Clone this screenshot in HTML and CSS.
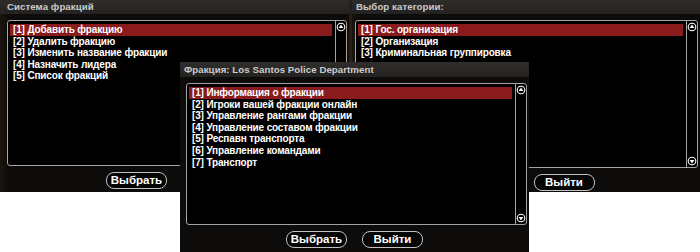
FILE: index.html
```html
<!DOCTYPE html>
<html lang="ru">
<head>
<meta charset="utf-8">
<title>Фракции</title>
<link rel="stylesheet" href="styles.css">
</head>
<body>
<div class="scene">
  <div class="desk"></div>

  <section class="dlg dlg-sys">
    <div class="title">Система фракций</div>
    <div class="body">
      <div class="listbox">
        <ul class="items">
          <li class="sel">[1] Добавить фракцию</li>
          <li>[2] Удалить фракцию</li>
          <li>[3] Изменить название фракции</li>
          <li>[4] Назначить лидера</li>
          <li>[5] Список фракций</li>
        </ul>
        <div class="scroll">
          <svg class="arr" width="10" height="10" viewBox="0 0 10 10"><circle cx="5" cy="5" r="3.8" fill="none" stroke="#fff" stroke-width="1.1"/><path d="M2.6 6 L5 2.6 L7.4 6 Z" fill="#fff"/></svg>
          <svg class="arr" width="10" height="10" viewBox="0 0 10 10"><circle cx="5" cy="5" r="3.8" fill="none" stroke="#fff" stroke-width="1.1"/><path d="M2.6 4 L5 7.4 L7.4 4 Z" fill="#fff"/></svg>
        </div>
      </div>
    </div>
    <div class="footer">
      <span class="btn">Выбрать</span>
      <span class="btn">Выйти</span>
    </div>
  </section>

  <section class="dlg dlg-cat">
    <div class="title">Выбор категории:</div>
    <div class="body">
      <div class="listbox">
        <ul class="items">
          <li class="sel">[1] Гос. организация</li>
          <li>[2] Организация</li>
          <li>[3] Криминальная группировка</li>
        </ul>
        <div class="scroll">
          <svg class="arr" width="10" height="10" viewBox="0 0 10 10"><circle cx="5" cy="5" r="3.8" fill="none" stroke="#fff" stroke-width="1.1"/><path d="M2.6 6 L5 2.6 L7.4 6 Z" fill="#fff"/></svg>
          <svg class="arr" width="10" height="10" viewBox="0 0 10 10"><circle cx="5" cy="5" r="3.8" fill="none" stroke="#fff" stroke-width="1.1"/><path d="M2.6 4 L5 7.4 L7.4 4 Z" fill="#fff"/></svg>
        </div>
      </div>
    </div>
    <div class="footer">
      <span class="btn">Выбрать</span>
      <span class="btn">Выйти</span>
    </div>
  </section>

  <section class="dlg dlg-fac">
    <div class="title">Фракция: Los Santos Police Department</div>
    <div class="body">
      <div class="listbox">
        <ul class="items">
          <li class="sel">[1] Информация о фракции</li>
          <li>[2] Игроки вашей фракции онлайн</li>
          <li>[3] Управление рангами фракции</li>
          <li>[4] Управление составом фракции</li>
          <li>[5] Респавн транспорта</li>
          <li>[6] Управление командами</li>
          <li>[7] Транспорт</li>
        </ul>
        <div class="scroll">
          <svg class="arr" width="10" height="10" viewBox="0 0 10 10"><circle cx="5" cy="5" r="3.8" fill="none" stroke="#fff" stroke-width="1.1"/><path d="M2.6 6 L5 2.6 L7.4 6 Z" fill="#fff"/></svg>
          <svg class="arr" width="10" height="10" viewBox="0 0 10 10"><circle cx="5" cy="5" r="3.8" fill="none" stroke="#fff" stroke-width="1.1"/><path d="M2.6 4 L5 7.4 L7.4 4 Z" fill="#fff"/></svg>
        </div>
      </div>
    </div>
    <div class="footer">
      <span class="btn">Выбрать</span>
      <span class="btn">Выйти</span>
    </div>
  </section>
</div>
</body>
</html>
```

FILE: styles.css
```css
* { box-sizing: border-box; }

html, body {
  margin: 0;
  padding: 0;
  background: #ffffff;
}

.scene {
  position: relative;
  width: 700px;
  height: 252px;
  overflow: hidden;
  background: #ffffff;
  font-family: "Liberation Sans", Arial, sans-serif;
}

.desk {
  position: absolute;
  left: 0;
  top: 0;
  width: 700px;
  height: 192px;
  background: linear-gradient(90deg, #3e2b1c 0%, #2a1e14 50%, #4a3424 100%);
}

.dlg {
  position: absolute;
  display: flex;
  flex-direction: column;
  background: linear-gradient(90deg, #1a140f 0px, #0e0c0a 8px);
}

.dlg-sys { left: 0; top: -1px; width: 349px; height: 193px; }
.dlg-cat { left: 352px; top: -1px; width: 348px; height: 193px; }
.dlg-fac { left: 180px; top: 62px; width: 349px; height: 194px; background: #0e0c0a; }

.title {
  height: 15px;
  line-height: 16px;
  padding-left: 7px;
  background: linear-gradient(#2f2e2d, #232221);
  color: #cbcbcb;
  font-weight: bold;
  font-size: 9.7px;
  letter-spacing: 0.05px;
  white-space: nowrap;
}

.dlg-cat .title, .dlg-fac .title { padding-left: 4px; }

.body { padding-top: 6px; }
.dlg-sys .body { padding-left: 7px; padding-right: 2px; }
.dlg-cat .body { padding-left: 3px; padding-right: 2px; }
.dlg-fac .body { padding-left: 6px; padding-right: 2px; }

.listbox {
  height: 146px;
  display: flex;
  background: #000;
  border: 1px solid #a3a3a3;
  border-radius: 3px;
}

.dlg-cat .listbox { height: 148px; }
.dlg-fac .listbox { height: 142px; }

.items {
  flex: 1;
  margin: 0;
  padding: 3px 3px 0 2px;
  list-style: none;
}

.items li {
  height: 11.6px;
  line-height: 11.6px;
  padding-left: 3px;
  color: #ffffff;
  font-weight: bold;
  font-size: 10px;
  letter-spacing: -0.15px;
  white-space: nowrap;
}

.items li.sel {
  background: #8a1b1d;
}

.scroll {
  width: 11px;
  border-left: 1px solid #a3a3a3;
  display: flex;
  flex-direction: column;
  justify-content: space-between;
  align-items: center;
  padding: 1px 0;
}

.arr { display: block; }

.footer {
  display: flex;
  justify-content: center;
  gap: 15px;
  padding-top: 6px;
}

.btn {
  width: 61px;
  height: 17px;
  border: 1.5px solid #c2c2c2;
  border-radius: 8px;
  background: #050505;
  color: #ffffff;
  font-weight: bold;
  font-size: 11.5px;
  line-height: 14px;
  text-align: center;
}
```
